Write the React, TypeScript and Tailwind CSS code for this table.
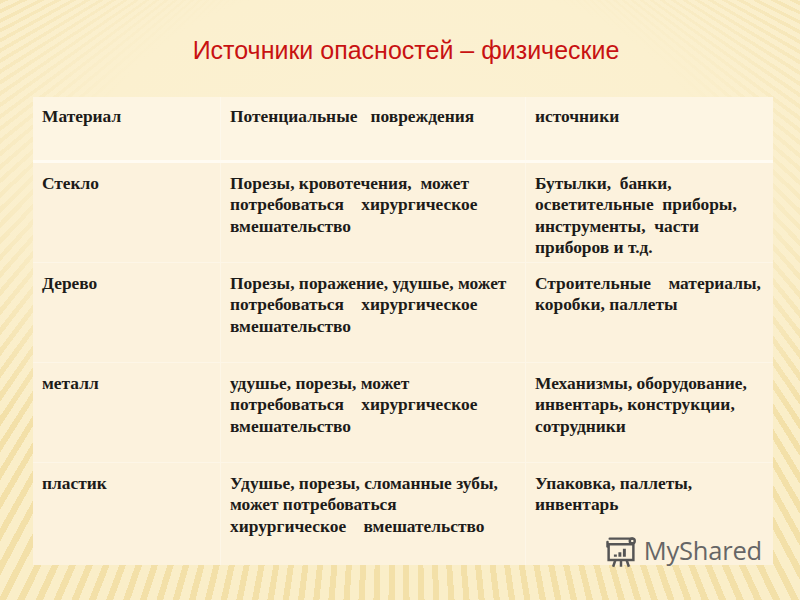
import React from 'react'

const serif = "font-['Liberation_Serif','Times_New_Roman',serif]"

type Row = {
  material: string
  damage: string[]
  sources: string[]
}

const rows: Row[] = [
  {
    material: 'Стекло',
    damage: ['Порезы, кровотечения,  может', 'потребоваться    хирургическое', 'вмешательство'],
    sources: ['Бутылки,  банки,', 'осветительные  приборы,', 'инструменты,  части', 'приборов и т.д.'],
  },
  {
    material: 'Дерево',
    damage: ['Порезы, поражение, удушье, может', 'потребоваться    хирургическое', 'вмешательство'],
    sources: ['Строительные    материалы,', 'коробки, паллеты'],
  },
  {
    material: 'металл',
    damage: ['удушье, порезы, может', 'потребоваться    хирургическое', 'вмешательство'],
    sources: ['Механизмы, оборудование,', 'инвентарь, конструкции,', 'сотрудники'],
  },
  {
    material: 'пластик',
    damage: ['Удушье, порезы, сломанные зубы,', 'может потребоваться', 'хирургическое    вмешательство'],
    sources: ['Упаковка, паллеты,', 'инвентарь'],
  },
]

function Lines({ lines }: { lines: string[] }) {
  return (
    <div className="whitespace-pre">
      {lines.map((l, i) => (
        <div key={i}>{l}</div>
      ))}
    </div>
  )
}

function MySharedLogo() {
  return (
    <div className="flex items-center gap-[5px] text-[#666]">
      <svg width="36" height="36" viewBox="0 0 32 32" fill="none" stroke="#555" strokeWidth="2.2">
        {/* rolled screen top */}
        <path d="M6 5h20" strokeLinecap="round" />
        <circle cx="26" cy="7" r="2.2" />
        <path d="M4 8v4" strokeLinecap="round" />
        {/* board frame */}
        <rect x="5" y="10" width="22" height="14" />
        {/* bars */}
        <path d="M11 21v-2M15 21v-4M19 21v-7" strokeWidth="2.6" />
        {/* legs */}
        <path d="M11 24l-2 6M16 24v6M21 24l2 6" />
      </svg>
      <span className="font-['Open_Sans','Liberation_Sans',sans-serif] font-normal text-[25.5px] leading-none tracking-[-0.2px]">
        MyShared
      </span>
    </div>
  )
}

export default function App() {
  return (
    <div
      className="w-[800px] h-[600px] overflow-hidden flex flex-col [background:radial-gradient(ellipse_70%_58%_at_50%_28%,#fbf1d3_0%,#fbf0cf_55%,rgba(250,238,200,0)_100%),repeating-conic-gradient(from_0deg_at_50%_-30%,#f3e0a8_0deg_0.45deg,#faeec8_0.45deg_1.1deg)]"
    >
      <h1 className="pt-[34px] pl-[12px] h-[97px] text-center font-['Liberation_Sans',Arial,sans-serif] text-[25px] leading-[32px] text-[#c81212]">
        Источники опасностей – физические
      </h1>

      <div className={`relative ml-[33px] w-[740px] ${serif} font-bold text-[17.4px] leading-[21.3px] text-[#1c1b19]`}>
        <div className="grid grid-cols-[187px_305px_248px] bg-[#fdf5e3] h-[66px] border-b-[3px] border-[#fffbf2]">
          <div className="px-[9px] pt-[9px]">Материал</div>
          <div className="px-[9px] pt-[9px] border-l border-[#fdf8ec] whitespace-pre">Потенциальные   повреждения</div>
          <div className="px-[9px] pt-[9px] border-l border-[#fdf8ec]">источники</div>
        </div>
        {rows.map((r, i) => (
          <div
            key={r.material}
            className={`grid grid-cols-[187px_305px_248px] bg-[#fcf2dd] ${i === rows.length - 1 ? 'h-[102px]' : 'h-[100px] border-b border-[#fdf6e7]'}`}
          >
            <div className="px-[9px] pt-[10px]">{r.material}</div>
            <div className="px-[9px] pt-[10px] border-l border-[#fdf6e7]">
              <Lines lines={r.damage} />
            </div>
            <div className="px-[9px] pt-[10px] border-l border-[#fdf6e7]">
              <Lines lines={r.sources} />
            </div>
          </div>
        ))}
        <div className="absolute right-[11px] bottom-[-4px]">
          <MySharedLogo />
        </div>
      </div>
    </div>
  )
}
